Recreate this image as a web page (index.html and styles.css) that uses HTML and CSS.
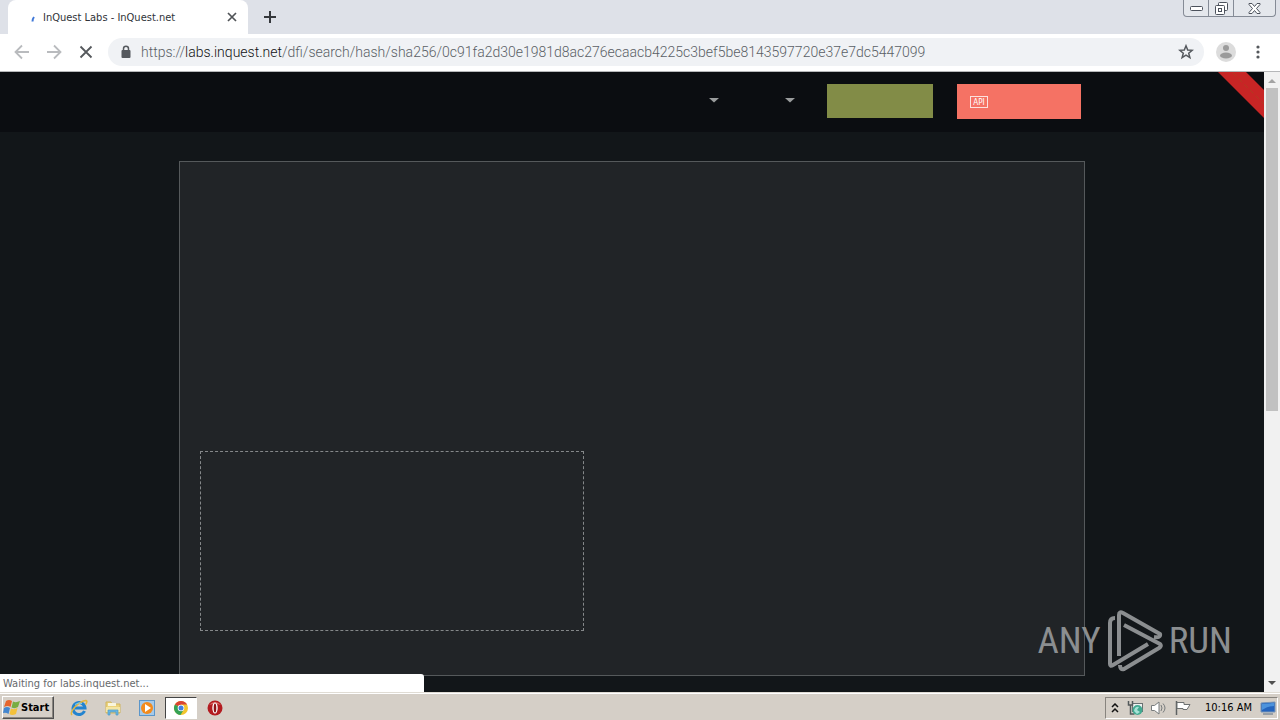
FILE: index.html
```html
<!DOCTYPE html>
<html lang="en">
<head>
<meta charset="utf-8">
<title>InQuest Labs - InQuest.net</title>
<link rel="stylesheet" href="styles.css">
</head>
<body>
<div class="desktop">
  <header class="tabstrip">
    <div class="tab">
      <svg class="spinner" width="16" height="16" viewBox="0 0 16 16"><path d="M5.500 12.500Q5.500 10 7 8" fill="none" stroke="#3f78d8" stroke-width="2"/></svg>
      <span class="tab-title">InQuest Labs - InQuest.net</span>
      <button class="plain tab-close" aria-label="Close tab"><svg width="10" height="10" viewBox="0 0 10 10"><path d="M1 1l8 8M9 1L1 9" stroke="#505357" stroke-width="1.7"/></svg></button>
    </div>
    <button class="plain new-tab" aria-label="New tab"><svg width="12" height="12" viewBox="0 0 12 12"><path d="M6 0v12M0 6h12" stroke="#35383c" stroke-width="2"/></svg></button>
    <div class="window-controls">
      <button class="plain wc" aria-label="Minimize"><svg width="13" height="5" viewBox="0 0 13 5"><rect x=".5" y=".5" width="12" height="4" rx="1" fill="#fff" stroke="#4c525c"/></svg></button>
      <button class="plain wc wc-mid" aria-label="Restore"><svg width="13" height="13" viewBox="0 0 13 13" fill="#fff" stroke="#4c525c"><rect x="3.500" y=".5" width="9" height="8" rx="1"/><rect x=".5" y="3.500" width="9" height="9" rx="1"/><rect x="3.500" y="6.500" width="3" height="3"/></svg></button>
      <button class="plain wc wc-close" aria-label="Close"><svg width="13" height="11" viewBox="0 0 13 11"><path d="M1 .5h3l2.500 3 2.500-3h3v1L8.500 5.500 12 9.500v1H9l-2.500-3-2.500 3H1v-1l3.500-4L1 1.500z" fill="#fff" stroke="#4c525c"/></svg></button>
    </div>
  </header>

  <div class="toolbar">
    <button class="plain tool" aria-label="Back"><svg width="16" height="16" viewBox="0 0 16 16"><path d="M15 8H2M8 1.500L1.500 8 8 14.500" fill="none" stroke="#b9bbbe" stroke-width="1.800"/></svg></button>
    <button class="plain tool" aria-label="Forward"><svg width="16" height="16" viewBox="0 0 16 16"><path d="M1 8h13M8 1.500L14.500 8 8 14.500" fill="none" stroke="#b9bbbe" stroke-width="1.800"/></svg></button>
    <button class="plain tool" aria-label="Stop"><svg width="14" height="14" viewBox="0 0 14 14"><path d="M1.500 1.500l11 11M12.500 1.500l-11 11" stroke="#55585c" stroke-width="1.800"/></svg></button>
    <div class="omnibox">
      <svg width="10" height="14" viewBox="0 0 10 14"><path d="M2.500 6V3.800a2.500 2.500 0 0 1 5 0V6" fill="none" stroke="#55595e" stroke-width="1.500"/><rect x=".5" y="5" width="9" height="8" rx="1" fill="#55595e"/></svg>
      <span class="url">https://<span class="host">labs.inquest.net</span>/dfi/search/hash/sha256/0c91fa2d30e1981d8ac276ecaacb4225c3bef5be8143597720e37e7dc5447099</span>
      <button class="plain star" aria-label="Bookmark this page"><svg width="16" height="16" viewBox="0 0 16 16"><path d="M8 1.800l1.700 4.200 4.500.3-3.500 2.900 1.200 4.400L8 11.200l-3.900 2.400 1.200-4.400L1.800 6.300l4.500-.3z" fill="none" stroke="#55595e" stroke-width="1.500"/></svg></button>
    </div>
    <button class="plain profile" aria-label="Profile"><svg width="20" height="20" viewBox="0 0 20 20"><circle cx="10" cy="10" r="10" fill="#dcdcdc"/><circle cx="10" cy="6" r="3" fill="#9b9b9b"/><ellipse cx="10" cy="13.500" rx="6" ry="3" fill="#9b9b9b"/></svg></button>
    <button class="plain menu" aria-label="Menu"><svg width="4" height="14" viewBox="0 0 4 14" fill="#55585c"><circle cx="2" cy="2" r="1.600"/><circle cx="2" cy="7" r="1.600"/><circle cx="2" cy="12" r="1.600"/></svg></button>
  </div>

  <div class="viewport">
    <main class="page">
      <nav class="site-nav">
        <div class="nav-inner">
          <button class="plain caret" aria-label="Tools"><svg width="10" height="5" viewBox="0 0 10 5"><path d="M0 0h10L5 4.500z" fill="#9a9c9d"/></svg></button>
          <button class="plain caret" aria-label="More"><svg width="10" height="5" viewBox="0 0 10 5"><path d="M0 0h10L5 4.500z" fill="#9a9c9d"/></svg></button>
          <button class="plain btn-green" aria-label="Sign in"></button>
          <button class="plain btn-red" aria-label="API"><span class="api">API</span></button>
        </div>
      </nav>
      <svg class="ribbon" width="46" height="46" viewBox="0 0 46 46"><path d="M0 0h28l18 18v28z" fill="#c72525"/><path d="M15 1l31 31" stroke="#b13a20" stroke-dasharray="5 3" fill="none"/></svg>
      <section class="panel"><div class="dropzone"></div></section>
      <div class="watermark">
        <span>ANY</span>
        <svg width="56" height="62" viewBox="0 0 56 62" fill="none" stroke="#8b8e90" stroke-width="4" stroke-linejoin="round"><path d="M8 8Q3 8 3 13V54Q3 57 6 55L41 34"/><path d="M47 27Q54 28 53 24L16 3Q12 1 12 5V46"/><path d="M17 15L53 34Q55 36 52 38L17 59Q13 60 13 55"/></svg>
        <span>RUN</span>
      </div>
      <div class="status">Waiting for labs.inquest.net...</div>
    </main>
    <div class="scrollbar">
      <svg width="16" height="16" viewBox="0 0 16 16"><path d="M4 11h8L8 7z" fill="#a3a3a3"/></svg>
      <div class="track"><div class="thumb"></div></div>
      <svg width="16" height="16" viewBox="0 0 16 16"><path d="M4 5h8L8 9z" fill="#505050"/></svg>
    </div>
  </div>

  <footer class="taskbar">
    <button class="start"><svg width="18" height="17" viewBox="0 0 18 17"><path d="M3 2Q6 0 9 2L7.500 8Q5 6 1 8z" fill="#e6652d"/><path d="M10 2.500Q13 4 17 2L15 8Q12 10 8.500 8.500z" fill="#78ad43"/><path d="M1 9Q4 7 7 9L5.500 15Q3 13 0 14z" fill="#4386cf"/><path d="M8 9.500Q11 11 14.500 9L13 15Q9 17 6.500 15z" fill="#f3c13b"/></svg>Start</button>
    <div class="launch">
      <button class="plain task" aria-label="Internet Explorer"><svg width="18" height="18" viewBox="0 0 18 18"><path d="M14.500 12A6 6 0 1 1 15 9H5" fill="none" stroke="#2384cf" stroke-width="3"/><path d="M2 16C-1 13 9 2 16 1.500C18 2 16 5 15.500 5.500" fill="none" stroke="#e4b73d" stroke-width="1.500"/><path d="M5 5.500Q8 3 12 4.500" stroke="#7cd0f4" fill="none"/></svg></button>
      <button class="plain task" aria-label="Explorer"><svg width="18" height="18" viewBox="0 0 18 18"><path d="M2 3h5l1 2h8v9H2z" fill="#ecd37b" stroke="#d0b560"/><path d="M4 4h8v3H4z" fill="#f9f5dc"/><path d="M2 8h14v5H2z" fill="#f5e6a4"/><path d="M4 16v-5h10v5h-2v-3H6v3z" fill="#6bb7df" stroke="#4c9aca" stroke-width=".7"/></svg></button>
      <button class="plain task" aria-label="Media Player"><svg width="18" height="18" viewBox="0 0 18 18"><rect x="1.500" y="1.500" width="15" height="15" fill="#a6cae9" stroke="#5b96ca"/><circle cx="9" cy="9" r="6" fill="#f38b1d"/><path d="M7 5l6 4-6 4z" fill="#fff"/></svg></button>
      <button class="plain task active" aria-label="Chrome"><svg width="16" height="16" viewBox="0 0 16 16"><circle cx="8" cy="8" r="7" fill="#f2c52e"/><path d="M8 8L1.900 4.500A7 7 0 0 1 14.100 4.500H8z" fill="#da4434"/><path d="M8 8L1.900 4.500A7 7 0 0 0 7.500 15L10.500 10z" fill="#35a255"/><circle cx="8" cy="8" r="3.300" fill="#fff"/><circle cx="8" cy="8" r="2.500" fill="#4280df"/></svg></button>
      <button class="plain task" aria-label="Opera"><svg width="16" height="16" viewBox="0 0 16 16"><circle cx="8" cy="8" r="7.500" fill="#b31b20"/><path d="M2 5Q8-1 14 5Q8 3 2 5" fill="#dc6b68"/><ellipse cx="8" cy="8" rx="2.700" ry="5.500" fill="#fff"/><ellipse cx="8" cy="8" rx="1.300" ry="4.500" fill="#8e1217"/></svg></button>
    </div>
    <div class="tray">
      <svg width="8" height="10" viewBox="0 0 8 10"><path d="M1 4l3-3 3 3M1 9l3-3 3 3" fill="none" stroke="#111" stroke-width="1.500"/></svg>
      <svg width="16" height="16" viewBox="0 0 16 16"><rect x="5.500" y="3.500" width="10" height="8" fill="#eef1f1" stroke="#697172"/><path d="M1.500 1v4h4V1M3.500 5v9h4" fill="none" stroke="#545a5b" stroke-width="1.500"/><circle cx="10.500" cy="10" r="5" fill="#43a991"/><path d="M7 11q1-5 5-4l-2 3 3 2-3 2z" fill="#a7e2d6"/></svg>
      <svg width="16" height="14" viewBox="0 0 16 14" fill="none" stroke="#777b7c"><path d="M.5 4.500h3L8 1v12L3.500 9.500h-3z" fill="#fff"/><path d="M10 4q2 3 0 6M12 2.500q4 4.500 0 9"/></svg>
      <svg width="16" height="14" viewBox="0 0 16 14"><path d="M1.500 0v14" stroke="#5e6162" stroke-width="1.500"/><path d="M2 1.500h7v2h6l-3 5H8v-1H2z" fill="#fff" stroke="#6d7071"/></svg>
      <span class="clock">10:16 AM</span>
      <svg width="16" height="14" viewBox="0 0 16 14"><path d="M1 2l14-1v10H1z" fill="#2464bd" stroke="#7895b6"/><path d="M2 3l12-1v3Q8 5 2 9z" fill="#4d93dc"/><path d="M3 13h10" stroke="#596e86"/></svg>
    </div>
  </footer>
</div>
</body>
</html>
```
FILE: styles.css
```css
* { box-sizing: border-box; }
body { margin: 0; font-family: "DejaVu Sans Condensed", "Noto Sans", sans-serif; font-size: 11px; color: #222; }
svg { display: block; flex: none; }
.plain { border: 0; padding: 0; margin: 0; background: none; font: inherit; display: flex; align-items: center; justify-content: center; }
.desktop { height: 100vh; display: flex; flex-direction: column; overflow: hidden; }

.tabstrip { flex: none; height: 34px; background: #dee1e8; display: flex; align-items: flex-start; padding-left: 8px; }
.tab { width: 240px; height: 34px; background: #fff; border-radius: 8px 8px 0 0; display: flex; align-items: center; padding: 0 10px 0 19px; }
.tab-title { flex: 1; color: #303338; white-space: nowrap; }
.new-tab { width: 28px; height: 34px; margin-left: 8px; }
.window-controls { margin-left: auto; margin-right: 4px; display: flex; height: 17px; border: 1px solid #858b96; border-top: 0; border-radius: 0 0 4px 4px; background: #e4e7ec; }
.tab-close { width: 12px; height: 16px; }
.wc { width: 24px; height: 16px; }
.wc-mid { width: 26px; border-left: 1px solid #858b96; border-right: 1px solid #858b96; }
.wc-close { width: 41px; }

.toolbar { flex: none; height: 38px; background: #fff; border-bottom: 1px solid #b6b7b9; display: flex; align-items: center; padding: 0 12px 1px 6px; }
.tool { width: 32px; height: 32px; }
.omnibox { flex: 1; min-width: 0; height: 28px; margin-left: 6px; border-radius: 14px; background: #f0f2f5; display: flex; align-items: center; padding: 0 10px 0 13px; }
.url { flex: 1; min-width: 0; margin-left: 10px; overflow: hidden; white-space: nowrap; font-family: Roboto, "Open Sans", sans-serif; font-size: 14px; font-weight: 300; color: #5a5f65; }
.host { color: #101214; }
.star { width: 16px; height: 28px; }
.profile { width: 20px; margin-left: 12px; }
.menu { width: 20px; margin-left: 12px; }

.viewport { flex: 1; min-height: 0; display: flex; }
.page { flex: 1; min-width: 0; position: relative; overflow: hidden; background: #121619; }
.site-nav { height: 60px; background: #0b0d11; }
.nav-inner { width: 906px; max-width: 100%; margin: 0 auto; padding: 12px 4px 0 0; display: flex; justify-content: flex-end; align-items: flex-start; }
.caret { width: 10px; height: 33px; margin-left: 66px; }
.btn-green { width: 106px; height: 34px; margin-left: 32px; background: #828c47; }
.btn-red { width: 124px; height: 35px; margin-left: 24px; padding-left: 13px; background: #f57264; justify-content: flex-start; }
.api { border: 1px solid #fde1de; width: 18px; height: 12px; line-height: 11px; font-family: "DejaVu Sans Condensed", sans-serif; font-size: 8px; color: #fff; text-align: center; }
.ribbon { position: absolute; top: 0; right: 0; }
.panel { width: 906px; max-width: 100%; min-height: 515px; margin: 29px auto 0; padding: 44px 20px; border: 1px solid #55595b; background: #212427; display: flex; flex-direction: column; justify-content: flex-end; }
.dropzone { width: 384px; height: 180px; border: 1px dashed #85888a; }
.watermark { position: absolute; right: 32px; bottom: 20px; display: flex; align-items: center; gap: 6px; font-family: "Liberation Sans Narrow", "Roboto Condensed", "DejaVu Sans Condensed", sans-serif; font-size: 37px; line-height: 62px; color: #8b8e90; }
.status { position: absolute; left: 0; bottom: 0; width: 424px; height: 18px; padding-left: 3px; line-height: 19px; background: #fff; border-top-right-radius: 3px; color: #66696c; }

.scrollbar { width: 16px; background: #f1f1f1; display: flex; flex-direction: column; }
.track { flex: 1; padding: 0 2px; }
.thumb { height: 55%; background: #c1c1c1; }

.taskbar { flex: none; height: 28px; background: #d5cfc7; border-top: 1px solid #e0dcd4; box-shadow: inset 0 1px #fff; display: flex; align-items: center; padding: 2px 2px 0; }
.start { height: 23px; width: 52px; padding: 0; display: flex; align-items: center; background: #d5cfc7; border: 1px solid; border-color: #fff #505050 #505050 #fff; box-shadow: inset -1px -1px #8a8680; font: bold 11px "DejaVu Sans Condensed", sans-serif; color: #000; }
.launch { display: flex; margin-left: 9px; gap: 2px; }
.task { width: 32px; height: 22px; }
.active { background: #fff; border: 1px solid; border-color: #444 #fff #fff #444; }
.tray { margin-left: auto; height: 22px; border: 1px solid; border-color: #88847e #fff #fff #88847e; display: flex; align-items: center; padding: 0 1px 0 5px; gap: 8px; }
.clock { color: #000; margin-left: 6px; white-space: nowrap; }
```
